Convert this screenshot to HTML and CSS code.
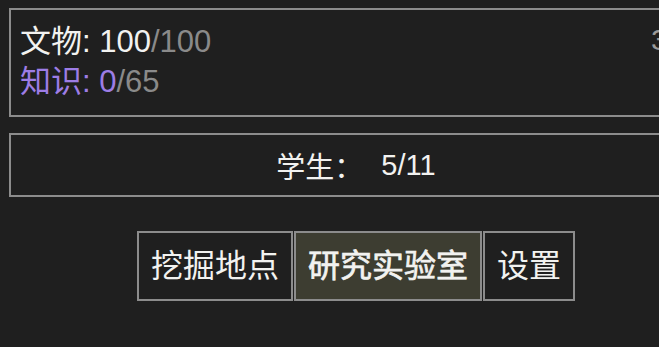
FILE: index.html
```html
<!DOCTYPE html>
<html lang="zh-CN">
<head>
<meta charset="utf-8">
<link rel="stylesheet" href="styles.css">
</head>
<body>
<div class="page">
  <section class="panel resources">
    <div class="res-list">
      <div class="res-line"><span class="label">文物:</span> <span class="cur">100</span><span class="max">/100</span></div>
      <div class="res-line knowledge"><span class="label">知识:</span> <span class="cur">0</span><span class="max">/65</span></div>
    </div>
    <div class="res-side">3天</div>
  </section>
  <section class="panel students">
    <span class="stu-label">学生：</span><span class="stu-val">5/11</span>
  </section>
  <nav class="tabs">
    <button class="tab">挖掘地点</button>
    <button class="tab active">研究实验室</button>
    <button class="tab">设置</button>
  </nav>
</div>
</body>
</html>
```
FILE: styles.css
```css
html, body {
  margin: 0;
  padding: 0;
  background: #1f1f1f;
  overflow: hidden;
}
body {
  font-family: "Liberation Sans", "Noto Sans CJK SC", sans-serif;
  color: #f2f2f0;
}
.page {
  width: 712px;
  padding: 8px 9px 0;
  box-sizing: border-box;
}
.panel {
  border: 2px solid #8c8c8c;
  box-sizing: border-box;
}
.resources {
  display: flex;
  justify-content: space-between;
  align-items: flex-start;
  padding: 12px 0 12px 9px;
  height: 109px;
}
.res-line {
  font-size: 31px;
  line-height: 40px;
  white-space: nowrap;
}
.res-line .max {
  color: #8a8a8a;
}
.knowledge .label,
.knowledge .cur {
  color: #9d7de6;
}
.res-side {
  font-size: 30px;
  line-height: 30px;
  margin-top: 3px;
  color: #9a9a9a;
  width: 50px;
  white-space: nowrap;
}
.students {
  margin-top: 16px;
  height: 64px;
  display: flex;
  align-items: center;
  justify-content: center;
  font-size: 29px;
}
.stu-val {
  margin-left: 18px;
}
.tabs {
  margin-top: 34px;
  display: flex;
  justify-content: center;
  gap: 1px;
}
.tab {
  font-family: "Liberation Sans", "Noto Sans CJK SC", sans-serif;
  font-size: 32px;
  line-height: 44px;
  padding: 11px 12px;
  height: 70px;
  background: #1f1f1f;
  color: #f2f2f0;
  border: 2px solid #8c8c8c;
  border-radius: 0;
  margin: 0;
}
.tab.active {
  background: #3d3d31;
  -webkit-text-stroke: 0.7px currentColor;
}
```
